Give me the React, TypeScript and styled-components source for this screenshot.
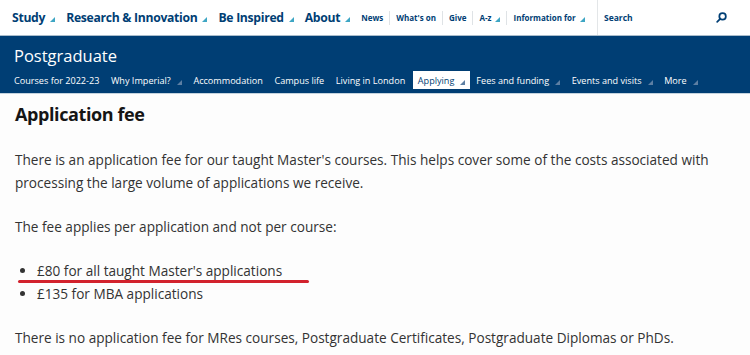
import React from "react";
import styled, { createGlobalStyle } from "styled-components";

const Global = createGlobalStyle`
  html, body { margin: 0; padding: 0; background: #fdfdfd; }
  body { font-family: "Open Sans", "Noto Sans", sans-serif; width: 750px; height: 355px; overflow: hidden; }
  * { box-sizing: border-box; }
`;

const BLUE = "#003E74";

const TopBar = styled.div`
  display: flex;
  align-items: center;
  height: 36px;
  background: #fff;
  border-bottom: 1px solid #a9bccb;
  white-space: nowrap;
  overflow: hidden;
`;

const MainLinks = styled.div`
  flex: 1;
  min-width: 0;
  display: flex;
  align-items: center;
  padding-left: 12px;
`;

const Primary = styled.a`
  display: flex;
  flex-shrink: 0;
  align-items: center;
  font-size: 12.2px;
  font-weight: 700;
  color: ${BLUE};
  margin-right: 11px;
  letter-spacing: -0.3px;
`;

const Caret = styled.span<{ $light?: boolean; $gap?: number }>`
  display: inline-block;
  width: 0;
  height: 0;
  margin-left: ${(p) => p.$gap ?? 6}px;
  margin-top: 4px;
  border-left: 5px solid transparent;
  border-bottom: 5px solid ${(p) => (p.$light ? "#5d7fa3" : "#3ea6c4")};
`;

const Secondary = styled.a<{ $sep?: boolean }>`
  display: flex;
  flex-shrink: 0;
  align-items: center;
  font-size: 8px;
  font-weight: 700;
  color: ${BLUE};
  padding: ${(p) => (p.$sep ? "0 6px" : "0 6px 0 0")};
  height: 14px;
  border-left: ${(p) => (p.$sep ? "1px solid #dfe3e6" : "none")};
`;

const SecondaryGroup = styled.div`
  display: flex;
  align-items: center;
`;

const SearchBox = styled.div`
  flex-shrink: 0;
  width: 153px;
  height: 35px;
  border-left: 1px solid #e3e6e8;
  display: flex;
  align-items: center;
  justify-content: space-between;
  padding: 0 22px 0 6px;
  font-size: 8.5px;
  font-weight: 700;
  color: ${BLUE};
`;

const Header = styled.div`
  background: ${BLUE};
  padding: 8px 0 4px 14px;
  border-bottom: 1px solid #c4d3de;
`;

const Title = styled.div`
  color: #fff;
  font-size: 16.5px;
  line-height: 24px;
  margin-bottom: 3px;
`;

const SubNav = styled.div`
  display: flex;
  align-items: center;
  white-space: nowrap;
`;

const SubItem = styled.a<{ $active?: boolean }>`
  display: flex;
  align-items: center;
  height: 18px;
  font-size: 9.1px;
  color: ${(p) => (p.$active ? BLUE : "#fff")};
  background: ${(p) => (p.$active ? "#fff" : "transparent")};
  padding: ${(p) => (p.$active ? "0 5px" : "0")};
  margin-right: ${(p) => (p.$active ? "6px" : "11.6px")};
  margin-left: ${(p) => (p.$active ? "-4px" : "0")};
`;

const Content = styled.div`
  position: relative;
  padding: 8px 15px 0 15px;
  color: #333;
  font-size: 13.6px;
  line-height: 23px;
`;

const Heading = styled.h1`
  margin: 0 0 22px 0;
  font-size: 18px;
  line-height: 24px;
  font-weight: 700;
  letter-spacing: -0.4px;
  color: #151515;
`;

const Para = styled.p`
  margin: 0 0 21px 0;
`;

const List = styled.ul`
  margin: 0 0 21px 0;
  padding-left: 22px;
`;

const Marker = styled.div`
  position: absolute;
  left: 18px;
  top: 186px;
  width: 291px;
  height: 3px;
  border-radius: 2px;
  background: #d2222d;
`;

const SearchIcon = () => (
  <svg width="13" height="13" viewBox="0 0 24 24" fill="none" stroke={BLUE} strokeWidth="3.2" strokeLinecap="round" style={{ flexShrink: 0 }}>
    <circle cx="14" cy="10" r="6" />
    <line x1="9.5" y1="14.5" x2="4" y2="20" />
  </svg>
);

export default function App() {
  return (
    <>
      <Global />
      <TopBar>
        <MainLinks>
          <Primary>Study<Caret $gap={5} /></Primary>
          <Primary>Research &amp; Innovation<Caret $gap={5} /></Primary>
          <Primary>Be Inspired<Caret $gap={5} /></Primary>
          <Primary>About<Caret $gap={5} /></Primary>
          <SecondaryGroup>
            <Secondary>News</Secondary>
            <Secondary $sep>What's on</Secondary>
            <Secondary $sep>Give</Secondary>
            <Secondary $sep>A-z<Caret $gap={4} /></Secondary>
            <Secondary $sep>Information for<Caret $gap={4} /></Secondary>
          </SecondaryGroup>
        </MainLinks>
        <SearchBox>
          <span>Search</span>
          <SearchIcon />
        </SearchBox>
      </TopBar>
      <Header>
        <Title>Postgraduate</Title>
        <SubNav>
          <SubItem>Courses for 2022-23</SubItem>
          <SubItem>Why Imperial?<Caret $light /></SubItem>
          <SubItem>Accommodation</SubItem>
          <SubItem>Campus life</SubItem>
          <SubItem>Living in London</SubItem>
          <SubItem $active>Applying<Caret $light /></SubItem>
          <SubItem>Fees and funding<Caret $light /></SubItem>
          <SubItem>Events and visits<Caret $light /></SubItem>
          <SubItem>More<Caret $light /></SubItem>
        </SubNav>
      </Header>
      <Content>
        <Heading>Application fee</Heading>
        <Para>
          There is an application fee for our taught Master's courses. This helps cover some of the costs associated with
          processing the large volume of applications we receive.
        </Para>
        <Para>The fee applies per application and not per course:</Para>
        <List>
          <li>£80 for all taught Master's applications</li>
          <li>£135 for MBA applications</li>
        </List>
        <Para>There is no application fee for MRes courses, Postgraduate Certificates, Postgraduate Diplomas or PhDs.</Para>
        <Marker />
      </Content>
    </>
  );
}
